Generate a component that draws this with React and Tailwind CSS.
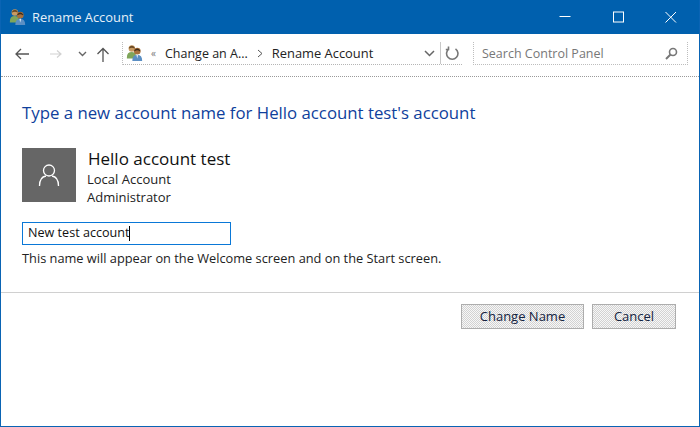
import React from "react";

const UsersIcon = ({ size = 20 }) => (
  <svg width={size} height={size} viewBox="0 0 20 20">
    <circle cx="6.5" cy="5" r="3.6" fill="#c99b62" />
    <path d="M3 4.5 Q6.5 -0.5 10 4.5 L9.4 5 Q6.5 3.5 3.6 5 Z" fill="#6b4a25" />
    <path d="M1 15 Q1 9 6.5 9 Q10 9 11 12 L9 16 L1 16 Z" fill="#7fa55a" />
    <circle cx="12.5" cy="8" r="3.7" fill="#a8703c" />
    <path d="M9 7.5 Q12.5 2.5 16 7.5 L15.4 8 Q12.5 6 9.6 8 Z" fill="#3d2a18" />
    <path d="M7 19 Q7 12 12.5 12 Q18 12 18 19 Z" fill="#5b8fc4" />
    <path d="M11.5 12 L13.5 12 L12.5 16 Z" fill="#dfe9f3" />
  </svg>
);

const Button = ({ width, children }) => (
  <button
    className={`${width} h-[25px] border border-[#adadad] bg-[repeating-conic-gradient(#d2d2d2_0_25%,#f7f7f7_0_50%)] bg-[length:2px_2px] text-[13px] leading-none text-[#14233f]`}
  >
    {children}
  </button>
);

export default function App() {
  return (
    <div className="w-[700px] h-[427px] flex flex-col bg-white border-x border-b border-[#0a64b4] font-['Open_Sans','Noto_Sans',sans-serif] overflow-hidden">
      {/* title bar */}
      <div className="h-[34px] shrink-0 -mx-px flex items-center bg-[#0060ae] pl-[9px] text-white">
        <UsersIcon size={18} />
        <span className="ml-[5px] mt-[2px] text-[12.9px] text-[#e6f0f8]">Rename Account</span>
        <div className="ml-auto mr-[6px] flex items-center">
          <svg width="46" height="34" viewBox="0 0 46 34">
            <path d="M17.5 16.5 H28.5" stroke="#fff" strokeWidth="1" />
          </svg>
          <svg width="46" height="34" viewBox="0 0 46 34" className="ml-[7px]">
            <rect x="18.5" y="12" width="10" height="10" fill="none" stroke="#fff" strokeWidth="1" />
          </svg>
          <svg width="46" height="34" viewBox="0 0 46 34" className="ml-[7px]">
            <path d="M17.5 12 L28 22.5 M28 12 L17.5 22.5" stroke="#fff" strokeWidth="1" />
          </svg>
        </div>
      </div>

      {/* nav bar */}
      <div className="h-[43px] shrink-0 flex items-start pt-2 border-b border-dotted border-[#9a9a9a]">
        <div className="w-[121px] h-[24px] flex items-center shrink-0">
          <svg width="16" height="14" viewBox="0 0 16 14" className="ml-[13px]">
            <path d="M15 7 H2 M7 2 L2 7 L7 12" fill="none" stroke="#555" strokeWidth="1.3" />
          </svg>
          <svg width="14" height="12" viewBox="0 0 14 12" className="ml-[19px]">
            <path d="M1 6 H12 M8 2.5 L12 6 L8 9.5" fill="none" stroke="#d2d2d2" strokeWidth="1.2" />
          </svg>
          <svg width="9" height="6" viewBox="0 0 9 6" className="ml-[15px]">
            <path d="M1 1 L4.5 4.5 L8 1" fill="none" stroke="#666" strokeWidth="1.4" />
          </svg>
          <svg width="14" height="15" viewBox="0 0 14 15" className="ml-[9px]">
            <path d="M7 15 V2 M1.5 7 L7 1.5 L12.5 7" fill="none" stroke="#555" strokeWidth="1.3" />
          </svg>
        </div>
        <div className="w-[340px] h-[23px] flex items-center shrink-0 border-l border-b border-b-[#b5b5b5] border-dotted border-l-[#bdbdbd] pl-[3px]">
          <UsersIcon size={18} />
          <span className="ml-[7px] text-[10px] text-[#777]">«</span>
          <span className="ml-[9px] mt-[2px] text-[12.5px] text-[#222]">Change an A...</span>
          <svg width="6" height="9" viewBox="0 0 6 9" className="ml-[9px]">
            <path d="M1 1 L5 4.5 L1 8" fill="none" stroke="#555" strokeWidth="1" />
          </svg>
          <span className="ml-[9px] mt-[2px] text-[12.9px] text-[#222]">Rename Account</span>
          <svg width="11" height="7" viewBox="0 0 11 7" className="ml-auto mr-[5px]">
            <path d="M1 1 L5.5 5.5 L10 1" fill="none" stroke="#666" strokeWidth="1.5" />
          </svg>
          <div className="w-[22px] h-full flex items-center justify-center border-l border-[#c8c8c8]">
            <svg width="14" height="14" viewBox="0 0 14 14">
              <path d="M4 2.8 A5.7 5.7 0 1 0 10.5 2.8 M3.5 0.5 V3.5 H0.8" fill="none" stroke="#777" strokeWidth="1.6" />
            </svg>
          </div>
        </div>
        <div className="ml-[11px] w-[215px] h-[23px] flex items-center border-l border-r border-b border-dotted border-[#bdbdbd] pl-2 pr-[9px] text-[12.5px] text-[#777]">
          <span className="mt-[2px]">Search Control Panel</span>
          <svg width="13" height="13" viewBox="0 0 13 13" className="ml-auto">
            <circle cx="8" cy="5" r="3.5" fill="none" stroke="#777" strokeWidth="1.6" />
            <path d="M5.5 7.5 L1 12" stroke="#777" strokeWidth="2" />
          </svg>
        </div>
      </div>

      {/* body */}
      <div className="flex-1 flex flex-col">
        <div className="px-[21px] pt-[24px]">
          <h1 className="text-[16.8px] leading-[24px] text-[#0f3f9c]">
            Type a new account name for Hello account test's account
          </h1>
          <div className="mt-[23px] flex">
            <div className="w-[54px] h-[54px] flex items-center justify-center bg-[#666666]">
              <svg width="22" height="24" viewBox="0 0 22 24">
                <circle cx="11" cy="7.5" r="5.5" fill="none" stroke="#fff" strokeWidth="1.3" />
                <path d="M1.5 23 Q1.5 14 8 13 M20.5 23 Q20.5 14 14 13" fill="none" stroke="#fff" strokeWidth="1.3" />
              </svg>
            </div>
            <div className="ml-[12px] flex flex-col">
              <span className="text-[17px] leading-[21px] text-[#111]">Hello account test</span>
              <span className="mt-[1px] -ml-px text-[13px] leading-[18px] text-[#222]">Local Account</span>
              <span className="-ml-px text-[13px] leading-[18px] text-[#222]">Administrator</span>
            </div>
          </div>
          <div className="mt-[16px] w-[209px] h-[23px] flex items-center border border-[#0a78d7] pl-[5px] text-[12.6px] text-[#111]">
            <span>New test account</span>
            <span className="w-px h-[15px] bg-black"></span>
          </div>
          <p className="mt-[4px] text-[12.8px] leading-[18px] text-[#222]">
            This name will appear on the Welcome screen and on the Start screen.
          </p>
        </div>
        <div className="mt-[25px] border-t border-[#d0d0d0] flex justify-end gap-[8px] pt-[11px] pr-[23px]">
          <Button width="w-[123px]">Change Name</Button>
          <Button width="w-[84px]">Cancel</Button>
        </div>
      </div>
    </div>
  );
}
